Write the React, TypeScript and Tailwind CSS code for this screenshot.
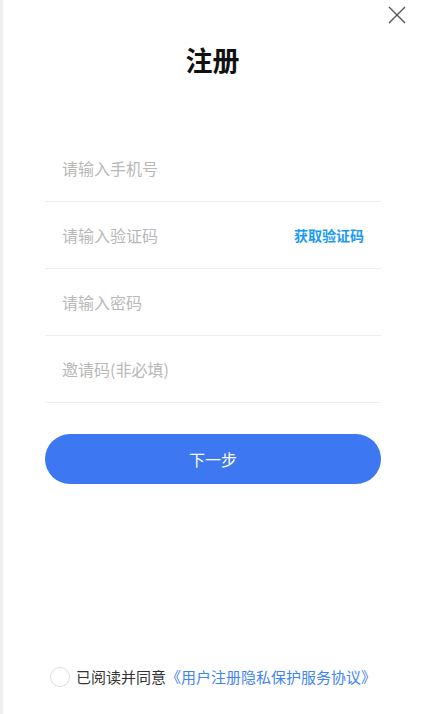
import React from "react";

const font = { fontFamily: '"Noto Sans CJK SC", "Noto Sans", sans-serif' };

function Row({ placeholder, action }: { placeholder: string; action?: string }) {
  return (
    <div className="flex h-[67px] items-center justify-between border-b border-[#eeeeee] pl-[17px] pr-[17px]">
      <span className="text-[16px] leading-none text-[#b8b8b8]">{placeholder}</span>
      {action && <span className="text-[14px] font-bold leading-none text-[#1a9af5]">{action}</span>}
    </div>
  );
}

export default function App() {
  return (
    <div className="flex h-[714px] w-[422px] flex-col border-l-[3px] border-[#efefef] bg-white" style={font}>
      <div className="flex h-[30px] justify-end pr-[16px] pt-[6px]">
        <svg width="18" height="18" viewBox="0 0 18 18" fill="none" stroke="#555" strokeWidth="1.4">
          <path d="M1 1L17 17M17 1L1 17" />
        </svg>
      </div>
      <div className="mt-[16px] text-center text-[27px] font-bold leading-[28px] text-[#111]">注册</div>
      <div className="ml-[42px] mr-[41px] mt-[61px] flex flex-col">
        <Row placeholder="请输入手机号" />
        <Row placeholder="请输入验证码" action="获取验证码" />
        <Row placeholder="请输入密码" />
        <Row placeholder="邀请码(非必填)" />
        <div className="mt-[31px] flex h-[50px] items-center justify-center rounded-full bg-[#3d77f1] text-[16px] text-white">
          下一步
        </div>
      </div>
      <div className="mt-auto mb-[26px] flex items-center pl-[47px]">
        <div className="h-[20px] w-[20px] rounded-full border border-[#dcdcdc]" />
        <span className="ml-[6px] text-[15px] text-[#333]">已阅读并同意</span>
        <span className="text-[15px] text-[#3f84f3]">《用户注册隐私保护服务协议》</span>
      </div>
    </div>
  );
}
